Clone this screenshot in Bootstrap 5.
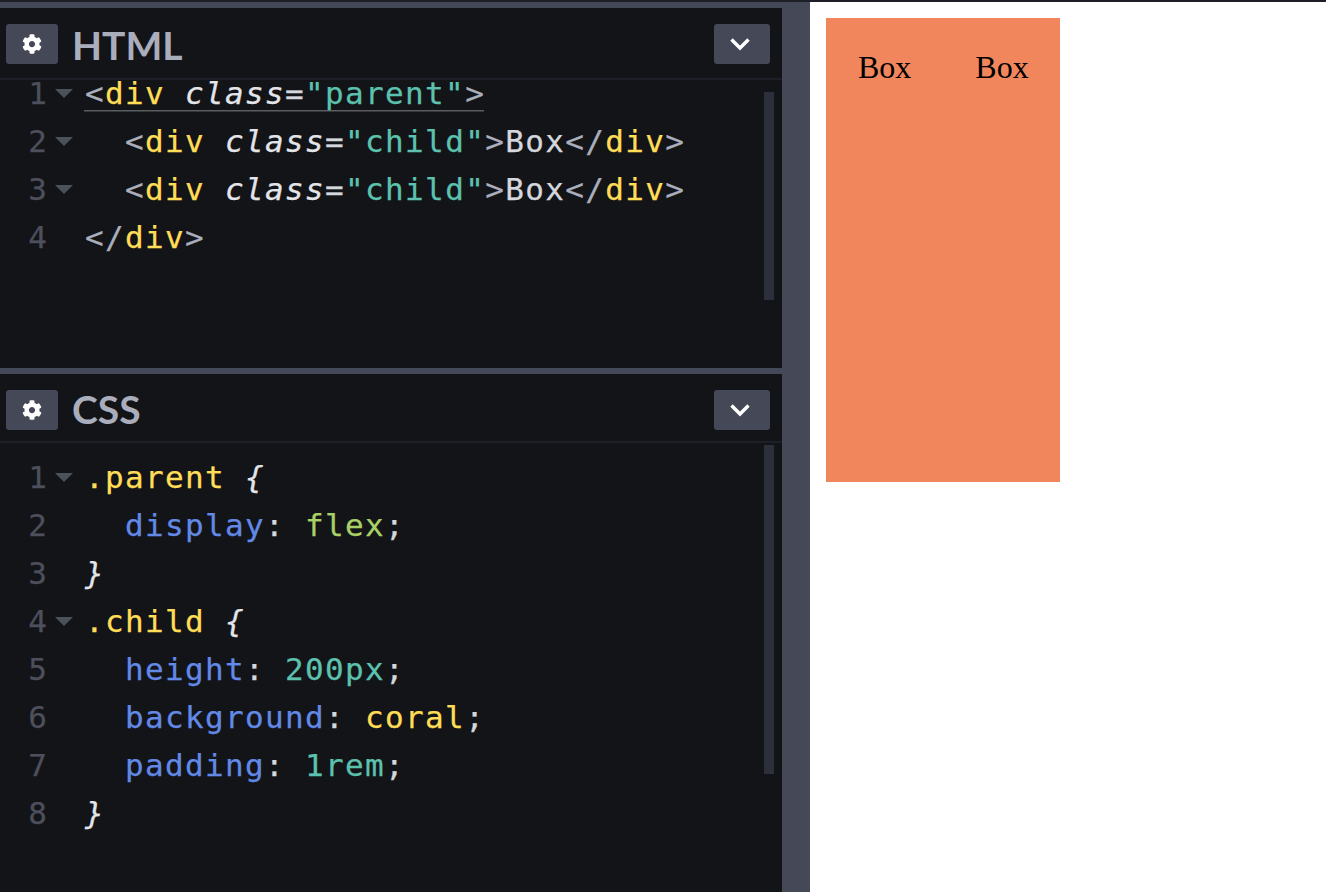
<!DOCTYPE html>
<html lang="en"><head><meta charset="utf-8"><title>Flex demo</title>
<link href="https://cdn.jsdelivr.net/npm/bootstrap@5.3.0/dist/css/bootstrap.min.css" rel="stylesheet">
<style>
html,body{height:100%;margin:0;overflow:hidden;background:#fff}
.topline{height:2px;background:#1e1f26}
.stage{height:890px}
.leftside{width:810px;background:#444857;padding:6px 28px 0 0}
.panel-box{background:#131417}
.html-box{height:360px}
.css-box{height:518px;margin-top:6px}
.pen-head{height:72px;padding:16px 12px 0 6px;border-bottom:2px solid #1e1f26;flex:none}
.css-box .pen-head{height:69px}
.icon-btn{height:40px;border-radius:3px;background:#444857;border:0}
.gear-btn{width:52px}.chev-btn{width:56px}
.pen-title{font:700 39px/42px Lato,sans-serif;color:#aaaebc;margin-left:14px}
.css-box .pen-title{margin-top:-2px}
.editor{font-family:"DejaVu Sans Mono",monospace;font-size:31px;line-height:48px;letter-spacing:1.34px;color:#d5d7de;overflow:hidden;position:relative;-webkit-text-stroke:.25px}
.html-box .editor{height:288px}
.css-box .editor{height:449px;padding-top:10px}
.html-box .code-wrap{margin-top:-11px}
.code-line{display:flex;height:48px}
.code-text{white-space:pre}
.gut{width:47px;text-align:right;color:#4c4f5c;flex:none;letter-spacing:0}
.fold{width:38px;flex:none;display:flex;align-items:center;padding-left:8px}
.tri{width:0;height:0;border-left:9.5px solid transparent;border-right:9.5px solid transparent;border-top:9px solid #4c4f5c}
.active-underline{box-shadow:0 1.5px 0 #5b5c62;height:41px;width:400px;margin-left:-1px;padding-left:1px}
.bar{position:absolute;left:764px;width:10px;background:#2c303a}
.html-box .bar{top:12px;height:208px}
.css-box .bar{top:2px;height:329px}
.t-tag{color:#aaaebc}.t-name{color:#ffdd57}.t-attr{font-style:italic;color:#e4e5ea}.t-str{color:#5cc1ae}
.t-prop{color:#6289e6}.t-green{color:#a9d066}.t-pun{color:#d5d7de}
.result{background:#fff;padding:16px}
.parent-demo{width:234px;height:464px;background:#f1865d;display:flex;font:32px/34px "Liberation Serif",serif;color:#000}
.child-demo{padding:32px;height:464px}
</style></head>
<body>
<div class="topline"></div>
<div class="stage d-flex">
  <div class="leftside d-flex flex-column flex-shrink-0">
    <section class="panel-box html-box d-flex flex-column">
      <div class="pen-head d-flex align-items-start">
        <button class="icon-btn gear-btn p-0 d-flex align-items-center justify-content-center" aria-label="Settings"><svg width="20" height="20" viewBox="0 0 512 512"><path fill="#fff" d="M487.4 315.7l-42.6-24.6c4.3-23.2 4.3-47 0-70.2l42.6-24.6c4.9-2.8 7.1-8.6 5.5-14-11.1-35.6-30-67.8-54.7-94.6-3.8-4.1-10-5.1-14.8-2.3L380.8 110c-17.9-15.4-38.5-27.3-60.8-35.1V25.8c0-5.6-3.9-10.5-9.4-11.7-36.7-8.2-74.3-7.8-109.2 0-5.5 1.2-9.4 6.1-9.4 11.7V75c-22.2 7.9-42.8 19.8-60.8 35.1L88.7 85.5c-4.9-2.8-11-1.9-14.8 2.3-24.7 26.7-43.6 58.9-54.7 94.6-1.7 5.4.6 11.2 5.5 14L67.3 221c-4.3 23.2-4.3 47 0 70.2l-42.6 24.6c-4.9 2.8-7.1 8.6-5.5 14 11.1 35.6 30 67.8 54.7 94.6 3.8 4.1 10 5.1 14.8 2.3l42.6-24.6c17.9 15.4 38.5 27.3 60.8 35.1v49.2c0 5.6 3.9 10.5 9.4 11.7 36.7 8.2 74.3 7.8 109.2 0 5.5-1.2 9.4-6.1 9.4-11.7v-49.2c22.2-7.9 42.8-19.8 60.8-35.1l42.6 24.6c4.9 2.8 11 1.9 14.8-2.3 24.7-26.7 43.6-58.9 54.7-94.6 1.5-5.5-.7-11.3-5.6-14.1zM256 336c-44.1 0-80-35.9-80-80s35.9-80 80-80 80 35.9 80 80-35.9 80-80 80z"/></svg></button>
        <span class="pen-title">HTML</span>
        <button class="icon-btn chev-btn ms-auto p-0 pe-1 d-flex align-items-center justify-content-center" aria-label="Collapse"><svg width="22" height="14" viewBox="0 0 22 14"><path d="M2.5 2.5l8.5 8.5 8.5-8.5" fill="none" stroke="#fff" stroke-width="3.4"/></svg></button>
      </div>
      <div class="editor">
        <div class="code-wrap">
<div class="code-line"><span class="gut">1</span><span class="fold"><i class="tri"></i></span><span class="code-text active-underline"><span class="t-tag">&lt;</span><span class="t-name">div</span> <span class="t-attr">class</span><span class="t-pun">=</span><span class="t-str">"parent"</span><span class="t-tag">&gt;</span></span></div>
<div class="code-line"><span class="gut">2</span><span class="fold"><i class="tri"></i></span><span class="code-text">  <span class="t-tag">&lt;</span><span class="t-name">div</span> <span class="t-attr">class</span><span class="t-pun">=</span><span class="t-str">"child"</span><span class="t-tag">&gt;</span>Box<span class="t-tag">&lt;/</span><span class="t-name">div</span><span class="t-tag">&gt;</span></span></div>
<div class="code-line"><span class="gut">3</span><span class="fold"><i class="tri"></i></span><span class="code-text">  <span class="t-tag">&lt;</span><span class="t-name">div</span> <span class="t-attr">class</span><span class="t-pun">=</span><span class="t-str">"child"</span><span class="t-tag">&gt;</span>Box<span class="t-tag">&lt;/</span><span class="t-name">div</span><span class="t-tag">&gt;</span></span></div>
<div class="code-line"><span class="gut">4</span><span class="fold"></span><span class="code-text"><span class="t-tag">&lt;/</span><span class="t-name">div</span><span class="t-tag">&gt;</span></span></div>
        </div>
        <div class="bar"></div>
      </div>
    </section>
    <section class="panel-box css-box d-flex flex-column">
      <div class="pen-head d-flex align-items-start">
        <button class="icon-btn gear-btn p-0 d-flex align-items-center justify-content-center" aria-label="Settings"><svg width="20" height="20" viewBox="0 0 512 512"><path fill="#fff" d="M487.4 315.7l-42.6-24.6c4.3-23.2 4.3-47 0-70.2l42.6-24.6c4.9-2.8 7.1-8.6 5.5-14-11.1-35.6-30-67.8-54.7-94.6-3.8-4.1-10-5.1-14.8-2.3L380.8 110c-17.9-15.4-38.5-27.3-60.8-35.1V25.8c0-5.6-3.9-10.5-9.4-11.7-36.7-8.2-74.3-7.8-109.2 0-5.5 1.2-9.4 6.1-9.4 11.7V75c-22.2 7.9-42.8 19.8-60.8 35.1L88.7 85.5c-4.9-2.8-11-1.9-14.8 2.3-24.7 26.7-43.6 58.9-54.7 94.6-1.7 5.4.6 11.2 5.5 14L67.3 221c-4.3 23.2-4.3 47 0 70.2l-42.6 24.6c-4.9 2.8-7.1 8.6-5.5 14 11.1 35.6 30 67.8 54.7 94.6 3.8 4.1 10 5.1 14.8 2.3l42.6-24.6c17.9 15.4 38.5 27.3 60.8 35.1v49.2c0 5.6 3.9 10.5 9.4 11.7 36.7 8.2 74.3 7.8 109.2 0 5.5-1.2 9.4-6.1 9.4-11.7v-49.2c22.2-7.9 42.8-19.8 60.8-35.1l42.6 24.6c4.9 2.8 11 1.9 14.8-2.3 24.7-26.7 43.6-58.9 54.7-94.6 1.5-5.5-.7-11.3-5.6-14.1zM256 336c-44.1 0-80-35.9-80-80s35.9-80 80-80 80 35.9 80 80-35.9 80-80 80z"/></svg></button>
        <span class="pen-title">CSS</span>
        <button class="icon-btn chev-btn ms-auto p-0 pe-1 d-flex align-items-center justify-content-center" aria-label="Collapse"><svg width="22" height="14" viewBox="0 0 22 14"><path d="M2.5 2.5l8.5 8.5 8.5-8.5" fill="none" stroke="#fff" stroke-width="3.4"/></svg></button>
      </div>
      <div class="editor">
<div class="code-line"><span class="gut">1</span><span class="fold"><i class="tri"></i></span><span class="code-text"><span class="t-name">.parent</span> <span class="t-attr">{</span></span></div>
<div class="code-line"><span class="gut">2</span><span class="fold"></span><span class="code-text">  <span class="t-prop">display</span><span class="t-pun">:</span> <span class="t-green">flex</span><span class="t-pun">;</span></span></div>
<div class="code-line"><span class="gut">3</span><span class="fold"></span><span class="code-text"><span class="t-attr">}</span></span></div>
<div class="code-line"><span class="gut">4</span><span class="fold"><i class="tri"></i></span><span class="code-text"><span class="t-name">.child</span> <span class="t-attr">{</span></span></div>
<div class="code-line"><span class="gut">5</span><span class="fold"></span><span class="code-text">  <span class="t-prop">height</span><span class="t-pun">:</span> <span class="t-str">200px</span><span class="t-pun">;</span></span></div>
<div class="code-line"><span class="gut">6</span><span class="fold"></span><span class="code-text">  <span class="t-prop">background</span><span class="t-pun">:</span> <span class="t-name">coral</span><span class="t-pun">;</span></span></div>
<div class="code-line"><span class="gut">7</span><span class="fold"></span><span class="code-text">  <span class="t-prop">padding</span><span class="t-pun">:</span> <span class="t-str">1rem</span><span class="t-pun">;</span></span></div>
<div class="code-line"><span class="gut">8</span><span class="fold"></span><span class="code-text"><span class="t-attr">}</span></span></div>
        <div class="bar"></div>
      </div>
    </section>
  </div>
  <main class="result flex-grow-1">
    <div class="parent-demo">
      <div class="child-demo">Box</div>
      <div class="child-demo">Box</div>
    </div>
  </main>
</div>
</body></html>
